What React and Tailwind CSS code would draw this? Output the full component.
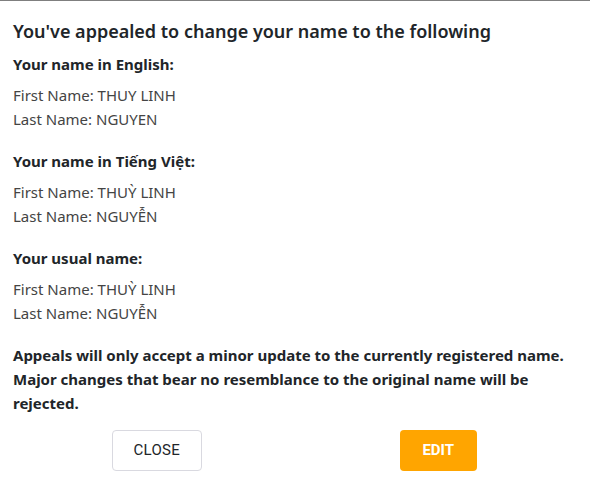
const sections = [
    { title: "Your name in English:", first: "THUY LINH", last: "NGUYEN" },
    { title: "Your name in Tiếng Việt:", first: "THUỲ LINH", last: "NGUYỄN" },
    { title: "Your usual name:", first: "THUỲ LINH", last: "NGUYỄN" },
];

const App = () => {
    return (
        <div className="w-[590px] h-[494px] bg-white border-t border-[#7f7f7f] font-['Noto_Sans',sans-serif]">
            <div className="pl-[13px] pr-[11px] pt-[17px]">
                <h2 className="text-[18px] leading-[27px] font-semibold text-[#212529] mb-[1px]">
                    You've appealed to change your name to the following
                </h2>
                {sections.map((section) => (
                    <div key={section.title} className="mt-[7px] mb-[18px]">
                        <h4 className="text-[15px] leading-[24px] font-bold text-[#212529]">{section.title}</h4>
                        <div className="mt-[7px] text-[15px] leading-[24px] text-[#444]">
                            <p>First Name: {section.first}</p>
                            <p>Last Name: {section.last}</p>
                        </div>
                    </div>
                ))}
                <p className="mt-[3px] text-[15px] leading-[24px] font-bold text-[#212529]">
                    Appeals will only accept a minor update to the currently registered name.
                    Major changes that bear no resemblance to the original name will be rejected.
                </p>
                <div className="grid grid-cols-2 justify-items-center mt-[15px] pl-[3px]">
                    <button className="w-[90px] h-[41px] border border-[#d9d9e0] rounded bg-white text-[15px] font-['Roboto',sans-serif] text-[#212529] tracking-[0.3px]">
                        CLOSE
                    </button>
                    <button className="w-[77px] h-[41px] rounded bg-[#ffa500] text-white text-[15px] font-bold font-['Roboto',sans-serif]">
                        EDIT
                    </button>
                </div>
            </div>
        </div>
    );
};

export default App;
